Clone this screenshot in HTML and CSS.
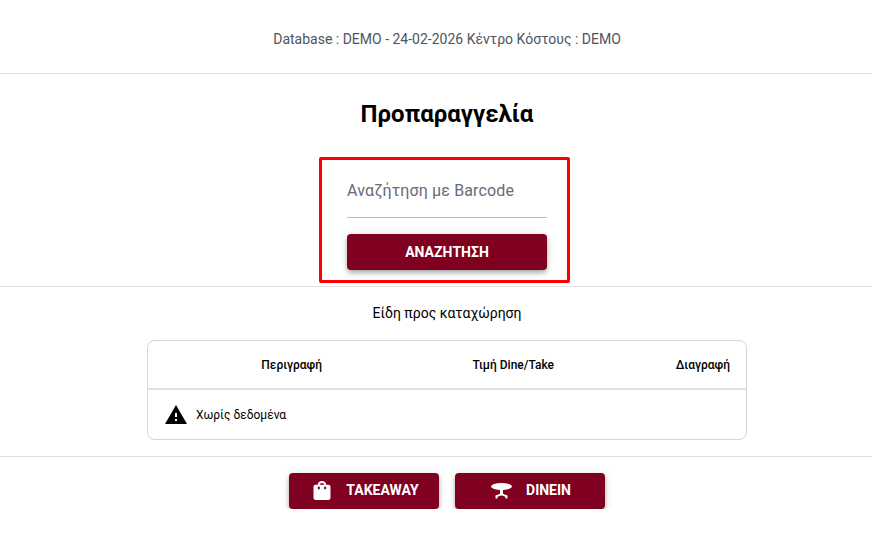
FILE: index.html
```html
<!DOCTYPE html>
<html lang="el">
<head>
    <meta charset="UTF-8">
    <title>Προπαραγγελία</title>
    <link rel="stylesheet" href="styles.css">
</head>
<body>
  <div class="info-bar">Database : DEMO - 24-02-2026 Κέντρο Κόστους : DEMO</div>

  <h1 class="title">Προπαραγγελία</h1>

  <div class="search-wrap">
    <div class="search-box">
      <div class="search-field">Αναζήτηση με Barcode</div>
      <button class="btn btn-search">ΑΝΑΖΗΤΗΣΗ</button>
    </div>
  </div>

  <div class="items-section">
    <div class="items-title">Είδη προς καταχώρηση</div>
    <div class="table-card">
      <div class="table-row table-head">
        <div class="col-desc">Περιγραφή</div>
        <div class="col-price">Τιμή Dine/Take</div>
        <div class="col-del">Διαγραφή</div>
      </div>
      <div class="table-empty">
        <svg class="warn-icon" viewBox="0 0 24 24" width="24" height="24"><path fill="#000" d="M1 21h22L12 2 1 21zm12-3h-2v-2h2v2zm0-4h-2v-4h2v4z"/></svg>
        <span>Χωρίς δεδομένα</span>
      </div>
    </div>
  </div>

  <div class="actions">
    <button class="btn btn-action">
      <svg class="btn-icon" viewBox="0 0 24 24" width="24" height="24"><path transform="matrix(1.0625 0 0 .95 .25 1.100)" fill="#fff" d="M18 6h-2c0-2.210-1.790-4-4-4S8 3.790 8 6H6c-1.100 0-2 .9-2 2v12c0 1.100.9 2 2 2h12c1.100 0 2-.9 2-2V8c0-1.100-.9-2-2-2zm-8 4c0 .55-.45 1-1 1s-1-.45-1-1V8h2v2zm2-6c1.100 0 2 .9 2 2h-4c0-1.100.9-2 2-2zm4 6c0 .55-.45 1-1 1s-1-.45-1-1V8h2v2z"/></svg>
      TAKEAWAY
    </button>
    <button class="btn btn-action">
      <svg class="btn-icon" viewBox="0 0 24 24" width="24" height="24"><ellipse fill="#fff" cx="12.500" cy="8.500" rx="10.500" ry="3.500"/><path fill="#fff" d="M11 11h3v4.500c1 1 3 1.500 4.500 2v3h-2v-1.500c-1-.5-2-1.500-4-1.500s-3 1-4 1.500v1.500h-2v-3c1.500-.5 3.500-1 4.500-2z"/></svg>
      DINEIN
    </button>
  </div>
</body>
</html>
```

FILE: styles.css
```css
body {
    margin: 0;
    font-family: 'Roboto', sans-serif;
    background-color: #fff;
    color: #000;
}

.info-bar {
    height: 73px;
    line-height: 78px;
    padding-left: 22px;
    text-align: center;
    font-size: 14px;
    color: #4d5560;
    border-bottom: 1px solid #e0e0e0;
}

.title {
    margin: 25px 0 0;
    padding-left: 22px;
    text-align: center;
    font-size: 24px;
    line-height: 30px;
    font-weight: 700;
}

.search-wrap {
    display: flex;
    justify-content: center;
    margin-top: 28px;
    padding-left: 17px;
    padding-bottom: 3px;
    border-bottom: 1px solid #e0e0e0;
}

.search-box {
    width: 251px;
    height: 126px;
    box-sizing: border-box;
    border: 3px solid #f00;
    border-radius: 2px;
    padding: 0 20px 0 25px;
}

.search-field {
    height: 57px;
    line-height: 62px;
    font-size: 16px;
    letter-spacing: 0.15px;
    color: #6b6b75;
    border-bottom: 1px solid #bdbdbd;
}

.btn {
    display: flex;
    align-items: center;
    justify-content: center;
    border: 0;
    border-radius: 4px;
    background-color: #800020;
    color: #fff;
    font-family: 'Roboto', sans-serif;
    font-size: 14px;
    font-weight: 700;
    height: 36px;
    box-shadow: 0 2px 4px -1px rgba(0, 0, 0, 0.2), 0 4px 5px 0 rgba(0, 0, 0, 0.14), 0 1px 10px 0 rgba(0, 0, 0, 0.12);
}

.btn-search {
    width: 200px;
    margin-top: 16px;
}

.items-section {
    padding-left: 22px;
    padding-bottom: 16px;
    border-bottom: 1px solid #e0e0e0;
}

.items-title {
    text-align: center;
    font-size: 14px;
    line-height: 20px;
    margin-top: 16px;
}

.table-card {
    width: 600px;
    height: 100px;
    box-sizing: border-box;
    margin: 17px auto 0;
    border: 1px solid #d5d5dc;
    border-radius: 8px;
    overflow: hidden;
}

.table-row {
    display: grid;
    grid-template-columns: 174px 232px 176px;
    font-size: 12px;
    font-weight: 500;
}

.table-head {
    height: 47px;
    line-height: 48px;
    border-bottom: 2px solid #e0e0e0;
}

.col-desc,
.col-price,
.col-del {
    text-align: right;
}

.table-empty {
    display: flex;
    align-items: center;
    gap: 8px;
    padding-left: 16px;
    height: 50px;
    font-size: 12px;
}

.actions {
    display: flex;
    justify-content: center;
    gap: 16px;
    margin-top: 16px;
    padding-left: 22px;
}

.btn-action {
    width: 150px;
    gap: 13px;
    padding: 0 0 2px;
}
```
